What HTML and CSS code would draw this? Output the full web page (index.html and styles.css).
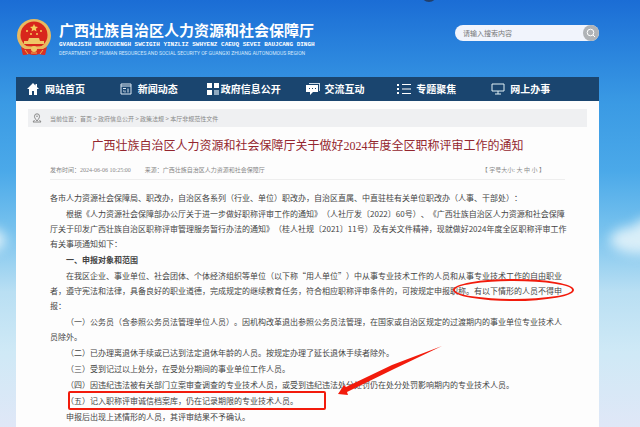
FILE: index.html
```
<!DOCTYPE html>
<html lang="zh-CN">
<head>
  <meta charset="UTF-8">
  <meta name="viewport" content="width=device-width, initial-scale=1.0">
  <title>广西壮族自治区人力资源和社会保障厅</title>
  <link rel="stylesheet" href="styles.css">
</head>
<body>
  <span class="notch"></span>
  <svg class="cloud cloud-right" viewBox="0 0 60 60"><ellipse cx="44" cy="30" rx="30" ry="14"/><ellipse cx="54" cy="20" rx="16" ry="12"/></svg>
  <svg class="cloud cloud-left" viewBox="0 0 60 60"><ellipse cx="16" cy="30" rx="30" ry="14"/></svg>

  <div class="page">
    <header class="header">
      <svg class="emblem" viewBox="0 0 34 37">
        <path d="M5 27h24l-1 9-6-1-5 1-5-1-6 1z" fill="#d93024"/>
        <ellipse cx="17" cy="16.500" rx="17" ry="16.500" fill="#e9b95f"/>
        <ellipse cx="17" cy="16" rx="13.500" ry="13.500" fill="#d8261c"/>
        <path d="M17 5l1.200 2.600 2.800.3-2.100 1.900.6 2.700-2.500-1.400-2.500 1.400.6-2.700L13 7.900l2.800-.3z" fill="#f6cf5b"/>
        <g fill="#f6cf5b"><circle cx="10" cy="12" r="1"/><circle cx="24" cy="12" r="1"/><circle cx="14" cy="15" r="1"/><circle cx="20" cy="15" r="1"/></g>
        <path d="M12 19h10l1 3h4v3H7v-3h4z" fill="#efc766"/>
        <path d="M5 26q12 3 24 0l-3 4q-9 2-18 0z" fill="#e9b95f"/>
        <path d="M4 28l4 2h18l4-2-2 8-6-1-5 1-5-1-6 1z" fill="#d93024"/>
        <circle cx="17" cy="30" r="3" fill="#efc766"/>
        <path d="M8 31l3 4M26 31l-3 4M14 34h6" stroke="#efb650" fill="none"/>
      </svg>
      <div class="brand">
        <h1>广西壮族自治区人力资源和社会保障厅</h1>
        <p class="brand-za">GVANGJSIH BOUXCUENGH SWCIGIH YINZLIZ SWHYENZ CAEUQ SEVEI BAUJCANG DINGH</p>
        <p class="brand-en">DEPARTMENT OF HUMAN RESOURCES AND SOCIAL SECURITY OF GUANGXI ZHUANG AUTONOMOUS REGION</p>
      </div>
      <form class="search">
        <input type="text" placeholder="请输入搜索内容" aria-label="搜索">
        <button type="button" aria-label="搜索">
          <svg viewBox="0 0 16 16"><circle cx="7.500" cy="7.500" r="3.300"/><path d="M10 10l2 2"/></svg>
        </button>
      </form>
    </header>

    <nav class="nav">
      <a href="#"><svg viewBox="0 0 14 14"><path d="M7 1L1 7h2v6h3V9h2v4h3V7h2l-2-2V2H9.500v1.500z" fill="#fff"/></svg>网站首页</a>
      <a href="#"><svg viewBox="0 0 14 14"><path d="M2 2h10v10H2zM2 4h10M4 6.500h3M4 9h1M9 6.500v4M6 8.500v2" fill="none" stroke="#dce8f2"/></svg>新闻动态</a>
      <a href="#" class="tight"><svg viewBox="0 0 14 14"><path d="M1 1h5v5H1zM1 8h5v5H1z" fill="#fff"/><path d="M8 1h5v5H8z" fill="#fff"/><path d="M8 8h5v5H8z" fill="#8fa9c0"/></svg>政府信息公开</a>
      <a href="#"><svg viewBox="0 0 14 14"><path d="M3 1h11v8h-1V2H3z" fill="#cbd9e6"/><path d="M0 3h12v7H7l-3 3v-3H0z" fill="#fff"/><path d="M3 6h1v1H3zM6 6h1v1H6zM9 6h1v1H9z" fill="#1a456f"/></svg>交流互动</a>
      <a href="#"><svg viewBox="0 0 14 14"><path d="M0 2h2v2H0zM0 6h2v2H0zM0 10h2v2H0zM5 2h9v1H5zM5 6.500h9v1H5zM5 11h9v1H5z" fill="#fff"/></svg>专题聚焦</a>
      <a href="#"><svg viewBox="0 0 14 14"><path d="M1 2h12v7H1zM7 9v3M4 12h6" fill="none" stroke="#dff0f5"/></svg>网上办事</a>
    </nav>

    <main class="content">
      <div class="crumbs">
        <svg viewBox="0 0 10 10"><path d="M5 8C3 5.500 2.500 4.500 2.500 3.300a2.500 2.500 0 0 1 5 0C7.500 4.500 7 5.500 5 8zM2.500 7L1 9h8L7.500 7" fill="none" stroke="#888"/><circle cx="5" cy="3.300" r=".8" fill="#888"/></svg>
        <span>当前位置：<a href="#">首页</a> &gt; <a href="#">政府信息公开</a> &gt; <a href="#">政策法规</a> &gt; <a href="#">本厅非规范性文件</a></span>
      </div>

      <article class="article">
        <h2>广西壮族自治区人力资源和社会保障厅关于做好2024年度全区职称评审工作的通知</h2>
        <div class="meta">
          <span>发布时间：2024-06-06 10:25:00</span>
          <span>来源：广西壮族自治区人力资源和社会保障厅</span>
          <span class="sizes">【 字号大小: <a href="#">大</a> <a href="#">中</a> <a href="#">小</a> 】</span>
        </div>
        <div class="text">
          <p class="flush">各市人力资源社会保障局、职改办，自治区各系列（行业、单位）职改办，自治区直属、中直驻桂有关单位职改办（人事、干部处）：</p>
          <p>根据《人力资源社会保障部办公厅关于进一步做好职称评审工作的通知》（人社厅发〔2022〕60号）、《广西壮族自治区人力资源和社会保障厅关于印发广西壮族自治区职称评审管理服务暂行办法的通知》（桂人社规〔2021〕11号）及有关文件精神，现就做好2024年度全区职称评审工作有关事项通知如下：</p>
          <h3>一、申报对象和范围</h3>
          <p class="circled">在我区企业、事业单位、社会团体、个体经济组织等单位（以下称“用人单位”）中从事专业技术工作的人员和从事专业技术工作的自由职业者，遵守宪法和法律，具备良好的职业道德，完成规定的继续教育任务，符合相应职称评审条件的，可按规定申报职称。有以下情形的人员不得申报：</p>
          <p>（一）公务员（含参照公务员法管理单位人员）。因机构改革退出参照公务员法管理，在国家或自治区规定的过渡期内的事业单位专业技术人员除外。</p>
          <p>（二）已办理离退休手续或已达到法定退休年龄的人员。按规定办理了延长退休手续者除外。</p>
          <p>（三）受到记过以上处分，在受处分期间的事业单位工作人员。</p>
          <p>（四）因违纪违法被有关部门立案审查调查的专业技术人员，或受到违纪违法处分处罚仍在处分处罚影响期内的专业技术人员。</p>
          <p><span class="boxed">（五）记入职称评审诚信档案库，仍在记录期限的专业技术人员。<svg class="arrow" viewBox="0 0 104 50"><path d="M104 0L54 19 8 41 6 39 0 48l10 1-1-3 47-23z"/></svg></span></p>
          <p>申报后出现上述情形的人员，其评审结果不予确认。</p>
        </div>
      </article>
    </main>
  </div>
</body>
</html>
```
FILE: styles.css
```
*, *::after {
  box-sizing: border-box;
}
body {
  margin: 0;
  min-height: 100vh;
  position: relative;
  overflow-x: hidden;
  font-family: "Noto Sans CJK SC", sans-serif;
  color: #444;
  background: linear-gradient(to bottom, #1b6dd5 0%, #2a84dd 12%, #3a9ae4 24%, #4ba9e9 40%, #79c3ee 54%, #b9dff3 68%, #cfe9f6 82%, #e0e7f7 100%);
}
h1, h2, h3, p {
  margin: 0;
}
a {
  color: inherit;
  text-decoration: none;
}
.notch {
  position: absolute;
  top: -14px;
  left: 67%;
  width: 16px;
  height: 16px;
  margin-left: -8px;
  border-radius: 50%;
  background: #213f6b;
}
.cloud {
  position: absolute;
  top: 210px;
  width: 60px;
  height: 60px;
  fill: #d9eef8;
  filter: blur(6px);
}
.cloud-right {
  right: -16px;
}
.cloud-left {
  left: -40px;
}
.page {
  position: relative;
  display: flex;
  flex-direction: column;
  min-height: 100vh;
  margin: 0 41px 0 16px;
}

/* header */
.header {
  display: flex;
  align-items: flex-start;
  height: 77px;
  padding-top: 19px;
}
.emblem {
  width: 34px;
  height: 37px;
  margin: 0 8px 0 1px;
}
.brand {
  color: #fff;
  white-space: nowrap;
}
.brand h1 {
  font-size: 15px;
  line-height: 22px;
}
.brand-za {
  font: bold 6px/8px "Liberation Mono", monospace;
}
.brand-en {
  font: 5px/8px Roboto, sans-serif;
  color: #d5e8fa;
}
.search {
  display: flex;
  width: 144px;
  height: 16px;
  margin: 6px 0 0 auto;
  border-radius: 8px;
  background: #f1f4fc;
}
.search input {
  flex: 1;
  min-width: 0;
  padding: 0 8px;
  border: 0;
  background: none;
  font-family: inherit;
  font-size: 7px;
}
.search input::placeholder {
  color: #777;
}
.search button {
  width: 16px;
  height: 16px;
  padding: 0;
  border: 0;
  border-radius: 50%;
  background: #b0b3b7;
}
.search svg {
  display: block;
  fill: none;
  stroke: #fff;
}

/* nav */
.nav {
  display: grid;
  grid-template-columns: 93fr 87fr 100fr 92fr 94fr 108fr;
  align-items: center;
  height: 24px;
  padding-left: 10px;
  background: #1a456f;
}
.nav a {
  display: flex;
  align-items: center;
  gap: 5px;
  color: #fff;
  font-size: 10px;
  font-weight: bold;
  line-height: 16px;
  white-space: nowrap;
}
.nav .tight {
  gap: 1px;
}
.nav svg {
  width: 14px;
  height: 14px;
}

/* content */
.content {
  flex: 1;
  padding-top: 8px;
  background: #fdfdfd;
}
.crumbs {
  display: flex;
  align-items: center;
  gap: 8px;
  height: 18px;
  margin: 0 12px;
  padding-left: 4px;
  background: #eff0f2;
  color: #888;
  font-size: 6px;
}
.crumbs svg {
  width: 10px;
  height: 10px;
}
.article h2 {
  margin-top: 10px;
  font: 12px/18px "Liberation Serif", "Noto Sans CJK SC", serif;
  color: #94262e;
  text-align: center;
}
.meta {
  display: flex;
  gap: 14px;
  margin: 10px 34px 0;
  padding-bottom: 4px;
  border-bottom: 1px solid #eee;
  color: #888;
  font: 6px/10px "Liberation Serif", "Noto Sans CJK SC", serif;
}
.sizes {
  margin: 0 20px 0 auto;
}
.text {
  padding: 10px 31px 4px 34px;
  font-size: 8px;
  line-height: 15px;
  text-spacing-trim: space-all;
}
.text p, .text h3 {
  margin-bottom: 1px;
  text-indent: 2em;
}
.text .flush {
  text-indent: 0;
}
.text h3 {
  font-size: 8px;
}

/* red marks */
.circled, .boxed {
  position: relative;
}
.circled::after {
  content: "";
  position: absolute;
  right: -6px;
  bottom: 12px;
  width: 121px;
  height: 22px;
  border: 2px solid #f21b0c;
  border-radius: 50%;
}
.boxed::after {
  content: "";
  position: absolute;
  inset: -4px -28px -4px 2px;
  border: 2px solid #f21b0c;
  border-radius: 2px;
}
.arrow {
  position: absolute;
  right: -144px;
  bottom: 10px;
  width: 104px;
  height: 50px;
  fill: #f21b0c;
}
```
